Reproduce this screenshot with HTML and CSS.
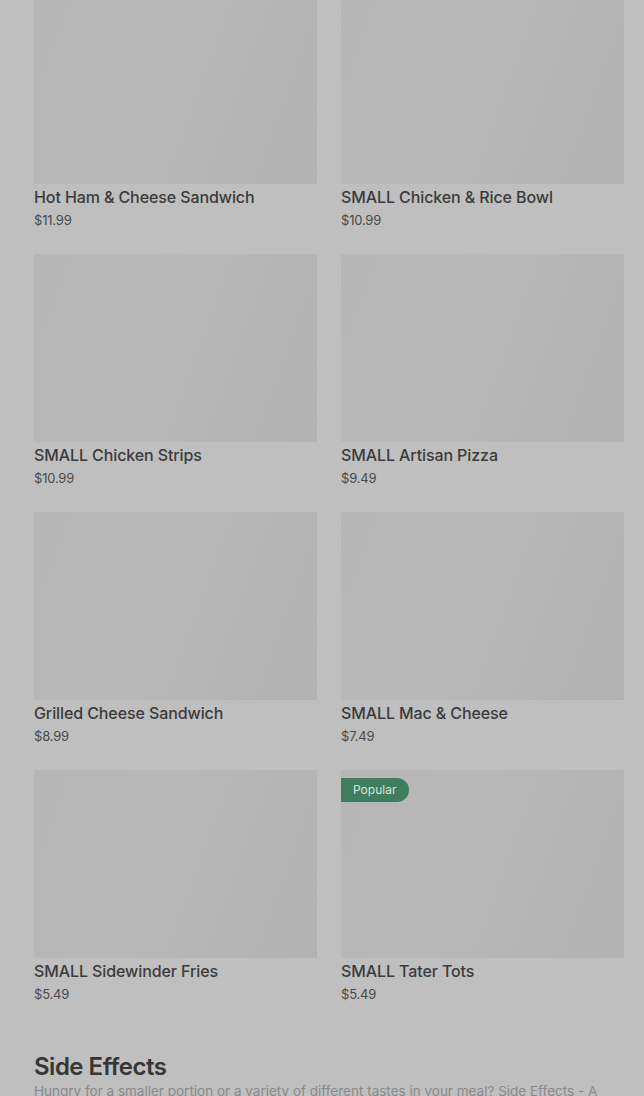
FILE: index.html
```html
<!DOCTYPE html>
<html>
<head>
<meta charset="utf-8">
<link rel="stylesheet" href="styles.css">
</head>
<body>
<main class="page">
  <section class="grid">
    <article class="card">
      <div class="thumb"></div>
      <h3 class="name">Hot Ham &amp; Cheese Sandwich</h3>
      <p class="price">$11.99</p>
    </article>
    <article class="card">
      <div class="thumb"></div>
      <h3 class="name">SMALL Chicken &amp; Rice Bowl</h3>
      <p class="price">$10.99</p>
    </article>
    <article class="card">
      <div class="thumb"></div>
      <h3 class="name">SMALL Chicken Strips</h3>
      <p class="price">$10.99</p>
    </article>
    <article class="card">
      <div class="thumb"></div>
      <h3 class="name">SMALL Artisan Pizza</h3>
      <p class="price">$9.49</p>
    </article>
    <article class="card">
      <div class="thumb"></div>
      <h3 class="name">Grilled Cheese Sandwich</h3>
      <p class="price">$8.99</p>
    </article>
    <article class="card">
      <div class="thumb"></div>
      <h3 class="name">SMALL Mac &amp; Cheese</h3>
      <p class="price">$7.49</p>
    </article>
    <article class="card">
      <div class="thumb"></div>
      <h3 class="name">SMALL Sidewinder Fries</h3>
      <p class="price">$5.49</p>
    </article>
    <article class="card">
      <div class="thumb"><span class="badge">Popular</span></div>
      <h3 class="name">SMALL Tater Tots</h3>
      <p class="price">$5.49</p>
    </article>
  </section>
  <section class="category">
    <h2 class="cat-title">Side Effects</h2>
    <p class="cat-desc">Hungry for a smaller portion or a variety of different tastes in your meal? Side Effects - A</p>
  </section>
</main>
</body>
</html>
```

FILE: styles.css
```css
html, body {
  margin: 0;
  padding: 0;
  background: #bfbfbf;
  overflow: hidden;
}
body {
  font-family: Inter, "Noto Sans", "Liberation Sans", sans-serif;
  color: #3d3d3d;
}
.page {
  padding: 0 20px 0 34px;
}
.grid {
  display: grid;
  grid-template-columns: 283px 283px;
  column-gap: 24px;
  row-gap: 23px;
  margin-top: -4px;
}
.card {
  display: flex;
  flex-direction: column;
}
.thumb {
  position: relative;
  height: 188px;
  background: linear-gradient(110deg, #b6b6b6 0%, #b9b9b9 40%, #b5b5b5 70%, #b2b2b2 100%);
}
.badge {
  position: absolute;
  left: 0;
  top: 8px;
  height: 24px;
  line-height: 24px;
  padding: 0 13px 0 12px;
  background: #3e7d5d;
  color: #d6e6dc;
  font-size: 12px;
  border-radius: 0 12px 12px 0;
}
.name {
  margin: 1px 0 0;
  font-size: 16px;
  line-height: 24px;
  font-weight: 500;
  letter-spacing: -0.1px;
  color: #3b3b3b;
}
.price {
  margin: 0;
  font-size: 13px;
  line-height: 22px;
  color: #4a4a4a;
  letter-spacing: -0.2px;
}
.category {
  padding-top: 47px;
}
.cat-title {
  margin: 0;
  font-size: 24px;
  line-height: 30px;
  font-weight: 600;
  color: #363636;
  letter-spacing: -0.5px;
}
.cat-desc {
  margin: 0;
  font-size: 13.5px;
  line-height: 18px;
  color: #8a8a8a;
  white-space: nowrap;
}
```
